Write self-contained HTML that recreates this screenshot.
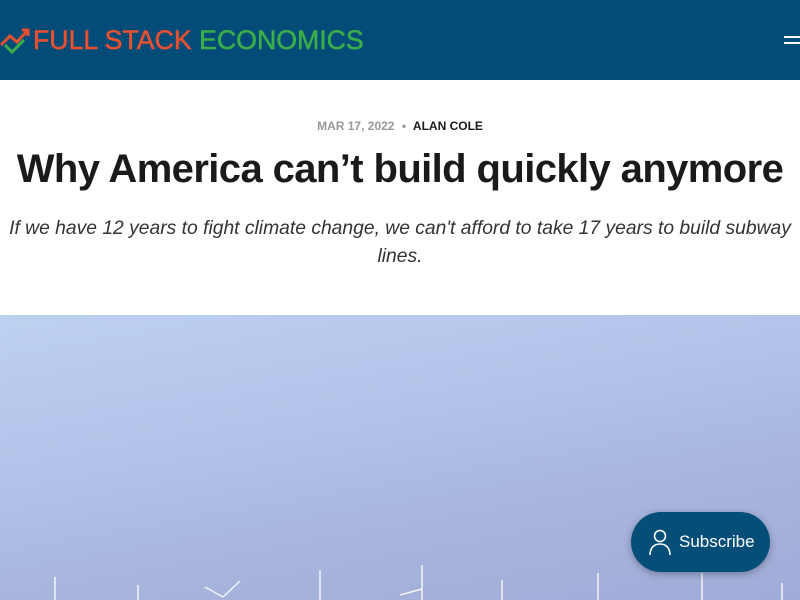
<!DOCTYPE html>
<html><head><style>
*{margin:0;padding:0;box-sizing:border-box}
body{width:800px;height:600px;overflow:hidden;background:#fff;font-family:"Liberation Sans",sans-serif;position:relative}
.hdr{height:80px;background:#044c78;position:relative}
.logo{position:absolute;left:33px;top:25px;font-size:26.7px;white-space:nowrap;font-weight:400;-webkit-text-stroke:0.5px currentColor}
.r{color:#e9502f}.g{color:#3aae48}
.menu{position:absolute;right:0;top:36px;width:16px;height:2px;background:#fff}
.menu:after{content:"";position:absolute;top:6px;left:0;width:16px;height:2px;background:#fff}
.meta{position:absolute;top:119px;width:100%;text-align:center;font-size:12px;font-weight:bold}
.title{position:absolute;top:147px;width:100%;text-align:center;font-size:40px;font-weight:bold;color:#1a1a1a;letter-spacing:-0.6px;white-space:nowrap}
.sub{position:absolute;top:215px;left:0;width:800px;text-align:center;font-size:19.3px;font-style:italic;color:#333;line-height:28px;white-space:nowrap}
.img{position:absolute;top:315px;left:0;width:800px;height:285px;background:linear-gradient(170deg,#bdd1f1 0%,#b3c4ea 35%,#a7b4dc 70%,#a0acd8 100%)}
.btn{position:absolute;left:631px;top:512px;width:139px;height:60px;border-radius:30px;background:#054e78;color:#fff;font-size:17px;box-shadow:0 2px 8px rgba(0,0,0,.3)}
.btn span{position:absolute;left:48px;top:20px}
</style></head><body>
<div class="hdr">
<svg style="position:absolute;left:0;top:27px" width="32" height="28" viewBox="0 0 32 28"><polyline points="1,18 10,9 17,15 28,3" fill="none" stroke="#e9502f" stroke-width="3"/><polyline points="22,3 28,3 28,9" fill="none" stroke="#e9502f" stroke-width="3"/><polyline points="5,18 12,25 24,13" fill="none" stroke="#3aae48" stroke-width="3"/></svg>
<div class="logo"><span class="r">FULL STACK</span> <span class="g">ECONOMICS</span></div>
<div class="menu"></div>
</div>
<div class="meta"><span style="color:#999">MAR 17, 2022</span> <span style="color:#999;margin:0 4px">•</span> <span style="color:#1a1a1a">ALAN COLE</span></div>
<div class="title">Why America can’t build quickly anymore</div>
<div class="sub">If we have 12 years to fight climate change, we can't afford to take 17 years to build subway<br>lines.</div>
<div class="img">
<svg width="800" height="285" style="position:absolute;left:0;top:0" stroke="#f4f4f6" stroke-width="1.5" fill="none">
<line x1="55" y1="262" x2="55" y2="285"/><line x1="138" y1="270" x2="138" y2="285"/>
<path d="M205 272l18 10M240 266l-17 16"/>
<line x1="320" y1="255" x2="320" y2="285"/><line x1="422" y1="250" x2="422" y2="285"/><path d="M400 280l22 -6"/>
<line x1="502" y1="265" x2="502" y2="285"/><line x1="598" y1="258" x2="598" y2="285"/><line x1="702" y1="258" x2="702" y2="285"/><line x1="782" y1="268" x2="782" y2="285"/>
</svg>
</div>
<div class="btn"><svg style="position:absolute;left:18px;top:17px" width="22" height="27" viewBox="0 0 22 27" fill="none" stroke="#fff" stroke-width="1.6"><circle cx="11" cy="7" r="5.5"/><path d="M1 26c0-7 4-11 10-11s10 4 10 11"/></svg><span>Subscribe</span></div>
</body></html>
